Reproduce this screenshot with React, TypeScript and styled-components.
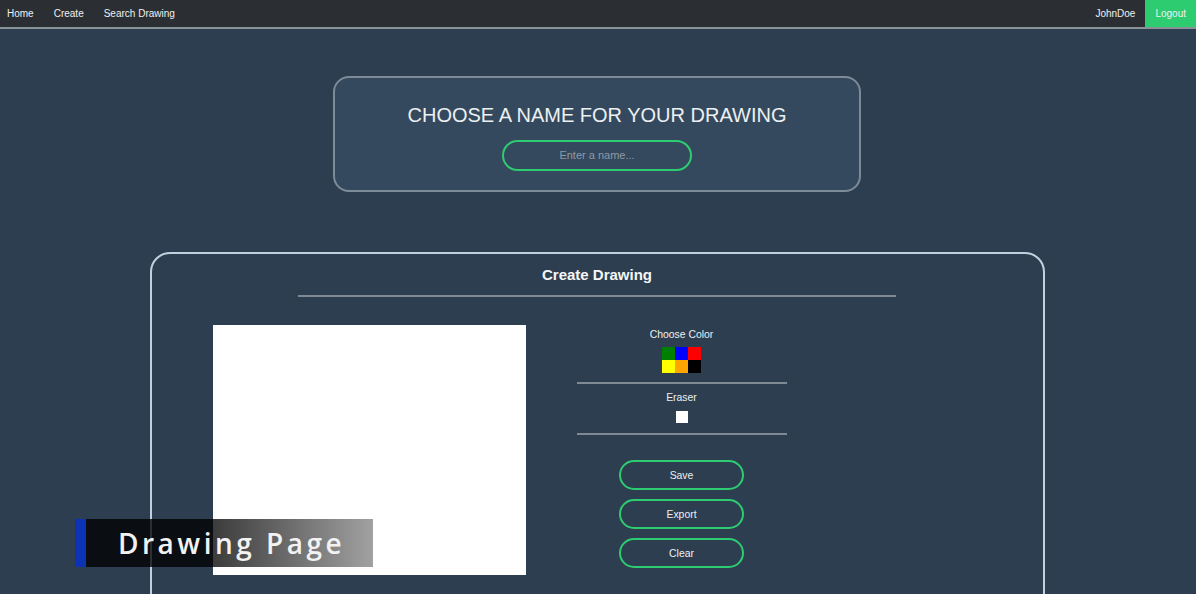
import React from "react";
import styled, { createGlobalStyle } from "styled-components";

const Global = createGlobalStyle`
  html, body { margin: 0; padding: 0; background: #2c3e50; }
  body { font-family: "Liberation Sans", Arial, sans-serif; color: #ecf0f1; overflow: hidden; }
  * { box-sizing: border-box; }
`;

const Page = styled.div`
  position: relative;
  width: 1196px;
  height: 594px;
  overflow: hidden;
  background: #2c3e50;
`;

const Nav = styled.nav`
  display: flex;
  align-items: stretch;
  height: 29px;
  background: #2b2f33;
  border-bottom: 2px solid #8a9299;
`;

const NavLink = styled.a<{ $active?: boolean }>`
  display: flex;
  align-items: center;
  padding: 0 10px;
  font-size: 10px;
  color: #f0f0f0;
  text-decoration: none;
  background: ${(p) => (p.$active ? "#2ecc71" : "transparent")};
`;

const NavLeft = styled.div`
  display: flex;
  & > a:first-child { padding-left: 7px; }
`;

const NavRight = styled.div`
  display: flex;
  margin-left: auto;
`;

const Main = styled.main`
  display: flex;
  flex-direction: column;
  align-items: center;
  padding-top: 47px;
  padding-right: 2px;
`;

const NameCard = styled.section`
  width: 528px;
  height: 116px;
  background: #34495e;
  border: 2px solid #7d8b99;
  border-radius: 16px;
  display: flex;
  flex-direction: column;
  align-items: center;
  padding-top: 25px;
`;

const NameTitle = styled.h2`
  margin: 0;
  font-size: 20px;
  font-weight: 400;
  color: #ecf0f1;
  line-height: 24px;
`;

const NameInput = styled.input`
  margin-top: 13px;
  width: 190px;
  height: 31px;
  border: 2px solid #2ecc71;
  border-radius: 16px;
  background: transparent;
  text-align: center;
  font-family: "Liberation Sans", Arial, sans-serif;
  font-size: 11px;
  color: #ecf0f1;
  outline: none;
  padding: 0 0 2px;
  &::placeholder { color: #8e99a4; }
`;

const DrawCard = styled.section`
  margin-top: 60px;
  width: 895px;
  height: 360px;
  border: 2px solid #c3d1de;
  border-radius: 20px;
  display: flex;
  flex-direction: column;
  align-items: center;
  padding-top: 12px;
`;

const DrawTitle = styled.h3`
  margin: 0;
  font-size: 15px;
  font-weight: 700;
  color: #f4f6f8;
  line-height: 18px;
`;

const Rule = styled.hr<{ $w: number; $mt: number }>`
  width: ${(p) => p.$w}px;
  height: 0;
  margin: ${(p) => p.$mt}px 0 0;
  border: none;
  border-top: 2px solid #7f8a95;
`;

const Workspace = styled.div`
  align-self: stretch;
  display: flex;
  align-items: flex-start;
  padding-left: 61px;
  margin-top: 28px;
  gap: 51px;
`;

const Canvas = styled.div`
  width: 313px;
  height: 250px;
  background: #ffffff;
`;

const Controls = styled.div`
  width: 210px;
  padding-top: 3px;
  display: flex;
  flex-direction: column;
  align-items: center;
`;

const Label = styled.div<{ $mt?: number }>`
  margin-top: ${(p) => p.$mt ?? 0}px;
  font-size: 10.4px;
  color: #ecf0f1;
  line-height: 14px;
`;

const Palette = styled.div`
  margin-top: 5px;
  display: grid;
  grid-template-columns: repeat(3, 13px);
  grid-auto-rows: 13px;
`;

const Swatch = styled.div<{ $c: string }>`
  background: ${(p) => p.$c};
`;

const EraserBox = styled.div`
  margin-top: 6px;
  width: 12px;
  height: 12px;
  background: #fff;
`;

const Button = styled.button`
  width: 125px;
  height: 30px;
  border: 2px solid #2ecc71;
  border-radius: 16px;
  background: transparent;
  color: #ecf0f1;
  font-family: "Liberation Sans", Arial, sans-serif;
  font-size: 10.4px;
  padding: 0;
`;

const Buttons = styled.div`
  margin-top: 25px;
  display: flex;
  flex-direction: column;
  gap: 9px;
`;

const Banner = styled.div`
  position: absolute;
  left: 75px;
  top: 519px;
  width: 298px;
  height: 48px;
  display: flex;
`;

const BannerBar = styled.div`
  width: 11px;
  background: #0d33b5;
`;

const BannerBody = styled.div`
  flex: 1;
  display: flex;
  align-items: center;
  padding-left: 32px;
  background: linear-gradient(90deg, rgba(0,0,0,0.78) 0%, rgba(0,0,0,0.77) 44%, rgba(0,0,0,0.37) 100%);
  font-family: "Open Sans", sans-serif;
  font-size: 28px;
  font-weight: 600;
  letter-spacing: 3.5px;
  color: #f2f2f2;
`;

const colors = ["#008000", "#0000ff", "#ff0000", "#ffff00", "#ffa500", "#000000"];

export default function App() {
  return (
    <Page>
      <Global />
      <Nav>
        <NavLeft>
          <NavLink>Home</NavLink>
          <NavLink>Create</NavLink>
          <NavLink>Search Drawing</NavLink>
        </NavLeft>
        <NavRight>
          <NavLink>JohnDoe</NavLink>
          <NavLink $active>Logout</NavLink>
        </NavRight>
      </Nav>
      <Main>
        <NameCard>
          <NameTitle>CHOOSE A NAME FOR YOUR DRAWING</NameTitle>
          <NameInput placeholder="Enter a name..." />
        </NameCard>
        <DrawCard>
          <DrawTitle>Create Drawing</DrawTitle>
          <Rule $w={598} $mt={11} />
          <Workspace>
            <Canvas />
            <Controls>
              <Label>Choose Color</Label>
              <Palette>
                {colors.map((c) => (
                  <Swatch key={c} $c={c} />
                ))}
              </Palette>
              <Rule $w={210} $mt={9} />
              <Label $mt={7}>Eraser</Label>
              <EraserBox />
              <Rule $w={210} $mt={10} />
              <Buttons>
                <Button>Save</Button>
                <Button>Export</Button>
                <Button>Clear</Button>
              </Buttons>
            </Controls>
          </Workspace>
        </DrawCard>
      </Main>
      <Banner>
        <BannerBar />
        <BannerBody>Drawing Page</BannerBody>
      </Banner>
    </Page>
  );
}
